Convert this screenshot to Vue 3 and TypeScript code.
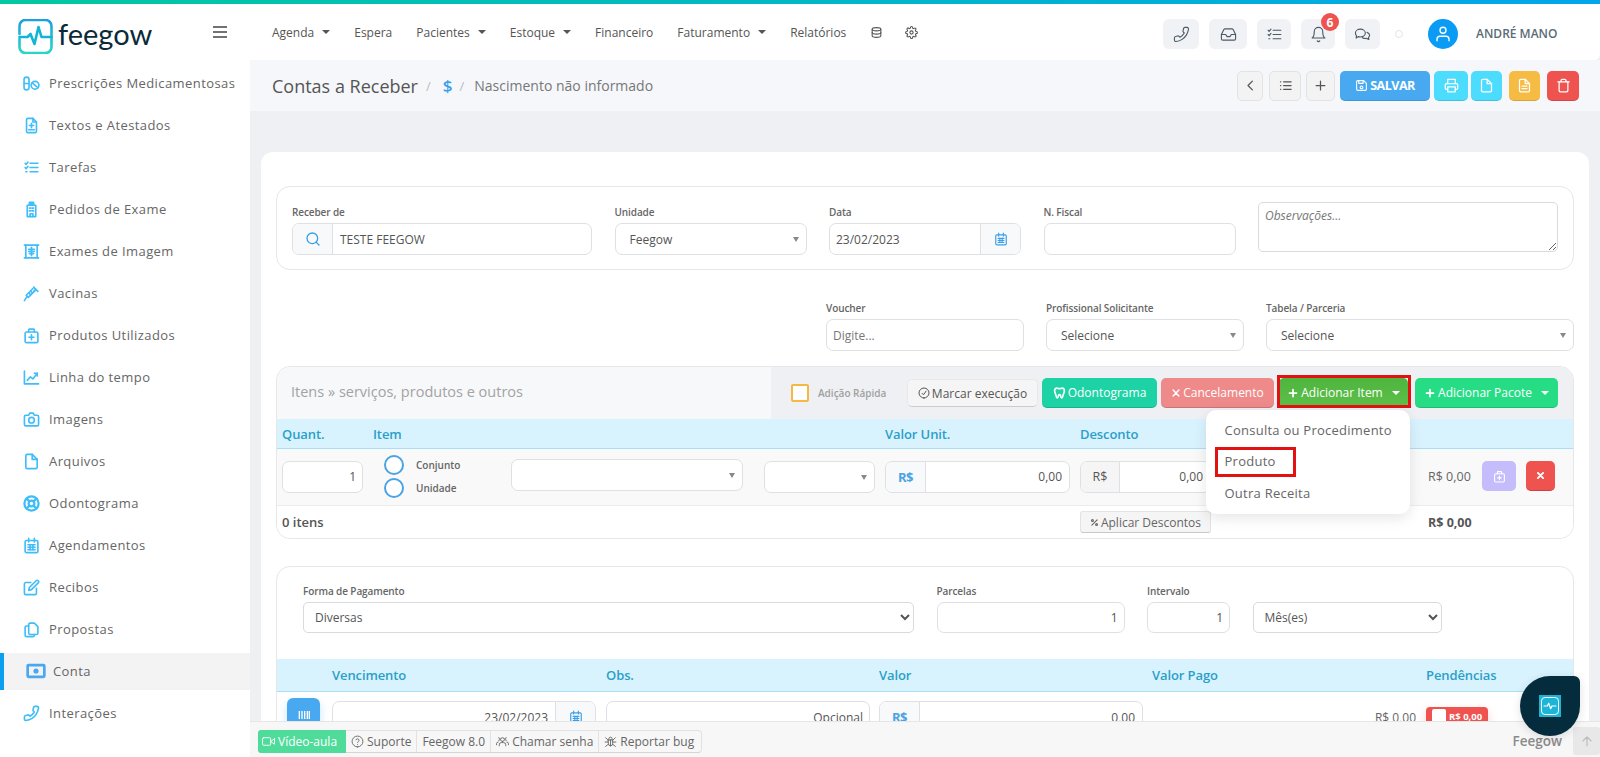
<script setup lang="ts">
import { h } from 'vue'

const icons: Record<string, string[]> = {
  phone: ['M22 16.92v3a2 2 0 0 1-2.18 2 19.79 19.79 0 0 1-8.63-3.07 19.5 19.5 0 0 1-6-6 19.79 19.79 0 0 1-3.07-8.67A2 2 0 0 1 4.11 2h3a2 2 0 0 1 2 1.72 12.84 12.84 0 0 0 .7 2.81 2 2 0 0 1-.45 2.11L8.09 9.91a16 16 0 0 0 6 6l1.27-1.27a2 2 0 0 1 2.11-.45 12.84 12.84 0 0 0 2.81.7A2 2 0 0 1 22 16.92z'],
  inbox: ['M22 12h-6l-2 3h-4l-2-3H2', 'M5.45 5.11L2 12v6a2 2 0 0 0 2 2h16a2 2 0 0 0 2-2v-6l-3.45-6.89A2 2 0 0 0 16.76 4H7.24a2 2 0 0 0-1.79 1.11z'],
  tasks: ['M10 6h11M10 12h11M10 18h11', 'M3 6l1.5 1.5L7 4.5M3 12l1.5 1.5L7 10.5', 'M4 18h1.5'],
  bell: ['M18 8A6 6 0 0 0 6 8c0 7-3 9-3 9h18s-3-2-3-9', 'M13.73 21a2 2 0 0 1-3.46 0'],
  chat: ['M2 10c0-3 3-5.500 7-5.500s7 2.500 7 5.500-3 5.500-7 5.500c-1 0-2-.1-3-.5L3 17l.6-3C2.600 13 2 11.500 2 10z', 'M18.500 9c2 .8 3.500 2.200 3.500 4 0 1.200-.6 2.200-1.500 3l.5 3-3.500-1.500c-1.800.4-4 0-5.500-1'],
  db: ['M12 3c4.400 0 8 1.300 8 3s-3.600 3-8 3-8-1.300-8-3 3.600-3 8-3z', 'M20 12c0 1.700-3.600 3-8 3s-8-1.300-8-3', 'M4 6v12c0 1.700 3.600 3 8 3s8-1.300 8-3V6'],
  gear: ['M12 15a3 3 0 1 0 0-6 3 3 0 0 0 0 6z', 'M19.4 15a1.65 1.65 0 0 0 .33 1.82l.06.06a2 2 0 1 1-2.83 2.83l-.06-.06a1.65 1.65 0 0 0-1.82-.33 1.65 1.65 0 0 0-1 1.51V21a2 2 0 1 1-4 0v-.09A1.65 1.65 0 0 0 9 19.4a1.65 1.65 0 0 0-1.82.33l-.06.06a2 2 0 1 1-2.83-2.83l.06-.06a1.65 1.65 0 0 0 .33-1.82 1.65 1.65 0 0 0-1.51-1H3a2 2 0 1 1 0-4h.09A1.65 1.65 0 0 0 4.600 9a1.65 1.65 0 0 0-.33-1.82l-.06-.06a2 2 0 1 1 2.83-2.83l.06.06a1.65 1.65 0 0 0 1.82.33H9a1.65 1.65 0 0 0 1-1.51V3a2 2 0 1 1 4 0v.09a1.65 1.65 0 0 0 1 1.51 1.65 1.65 0 0 0 1.82-.33l.06-.06a2 2 0 1 1 2.83 2.83l-.06.06a1.65 1.65 0 0 0-.33 1.82V9a1.65 1.65 0 0 0 1.51 1H21a2 2 0 1 1 0 4h-.09a1.65 1.65 0 0 0-1.51 1z'],
  user: ['M20 21v-2a4 4 0 0 0-4-4H8a4 4 0 0 0-4 4v2', 'M12 11a4 4 0 1 0 0-8 4 4 0 0 0 0 8z'],
  left: ['M15 19l-7-7 7-7'],
  list: ['M9 6h12M9 12h12M9 18h12', 'M4 6h.5M4 12h.5M4 18h.5'],
  plus: ['M12 5v14M5 12h14'],
  save: ['M19 21H5a2 2 0 0 1-2-2V5a2 2 0 0 1 2-2h11l5 5v11a2 2 0 0 1-2 2z', 'M7 3v5h8V3', 'M12 18a2.500 2.500 0 1 0 0-5 2.500 2.500 0 0 0 0 5z'],
  printer: ['M6 9V2h12v7', 'M6 18H4a2 2 0 0 1-2-2v-5a2 2 0 0 1 2-2h16a2 2 0 0 1 2 2v5a2 2 0 0 1-2 2h-2', 'M6 14h12v8H6z'],
  file: ['M13 2H6a2 2 0 0 0-2 2v16a2 2 0 0 0 2 2h12a2 2 0 0 0 2-2V9z', 'M13 2v7h7'],
  filetext: ['M13 2H6a2 2 0 0 0-2 2v16a2 2 0 0 0 2 2h12a2 2 0 0 0 2-2V9z', 'M13 2v7h7', 'M8 13h8M8 17h8'],
  trash: ['M3 6h18', 'M19 6v14a2 2 0 0 1-2 2H7a2 2 0 0 1-2-2V6m3 0V4a2 2 0 0 1 2-2h4a2 2 0 0 1 2 2v2'],
  search: ['M11 19a8 8 0 1 0 0-16 8 8 0 0 0 0 16z', 'M21 21l-4.350-4.350'],
  cal: ['M5 5h14a2 2 0 0 1 2 2v13a2 2 0 0 1-2 2H5a2 2 0 0 1-2-2V7a2 2 0 0 1 2-2z', 'M8 2v5M16 2v5', 'M7 11h10M7 14.500h10M7 18h10', 'M10 11v7M14 11v7'],
  pills: ['M5 3a3.500 3.500 0 0 1 3.500 3.500v11a3.500 3.500 0 0 1-7 0v-11A3.500 3.500 0 0 1 5 3z', 'M1.500 12h7', 'M17 9a5.500 5.500 0 1 0 0 11 5.500 5.500 0 0 0 0-11z', 'M13 11l8 7'],
  filemed: ['M14 2H7a2 2 0 0 0-2 2v16a2 2 0 0 0 2 2h10a2 2 0 0 0 2-2V7z', 'M14 2v5h5', 'M12 9v6M9 12h6', 'M8 18h8'],
  hospital: ['M6 6h12v16H6z', 'M9 2h6v4H9z', 'M12 2.500v3M10.500 4h3', 'M9 10h2M13 10h2M9 14h2M13 14h2', 'M10 22v-4h4v4'],
  xray: ['M2 3h20M2 21h20', 'M4 3v18M20 3v18', 'M12 6v12', 'M8 9h8M8 12h8M9 15h6'],
  syringe: ['M15 3l6 6', 'M18 6l-3 3', 'M17 8L7.500 17.500l-3-3L14 5', 'M5.500 16.500L2 22', 'M11 9l2 2M8.500 11.500l2 2'],
  medkit: ['M5 7h14a2 2 0 0 1 2 2v11a2 2 0 0 1-2 2H5a2 2 0 0 1-2-2V9a2 2 0 0 1 2-2z', 'M8 7V4a1 1 0 0 1 1-1h6a1 1 0 0 1 1 1v3', 'M12 11v7M8.500 14.500h7'],
  chart: ['M2 3v18h20', 'M6 16l4.500-5 3.500 3 6-8', 'M16 6h4v4'],
  camera: ['M4 6h4l1.500-3h5L16 6h4a2 2 0 0 1 2 2v11a2 2 0 0 1-2 2H4a2 2 0 0 1-2-2V8a2 2 0 0 1 2-2z', 'M12 17a4 4 0 1 0 0-8 4 4 0 0 0 0 8z'],
  ring: ['M12 22a10 10 0 1 0 0-20 10 10 0 0 0 0 20z', 'M12 16a4 4 0 1 0 0-8 4 4 0 0 0 0 8z', 'M5 5l4 4M19 5l-4 4M5 19l4-4M19 19l-4-4'],
  edit: ['M11 5H4a2 2 0 0 0-2 2v13a2 2 0 0 0 2 2h13a2 2 0 0 0 2-2v-7', 'M18.500 2.500a2.120 2.120 0 0 1 3 3L12 15l-4 1 1-4z'],
  copy: ['M10 3h6l5 5v9a2 2 0 0 1-2 2h-9a2 2 0 0 1-2-2V5a2 2 0 0 1 2-2z', 'M8 7H5a2 2 0 0 0-2 2v11a2 2 0 0 0 2 2h9a2 2 0 0 0 2-2v-1'],
  money: ['M3 5h18a1 1 0 0 1 1 1v12a1 1 0 0 1-1 1H3a1 1 0 0 1-1-1V6a1 1 0 0 1 1-1z', 'M12 13.500a1.500 1.500 0 1 0 0-3 1.500 1.500 0 0 0 0 3z'],
  check: ['M12 22a10 10 0 1 0 0-20 10 10 0 0 0 0 20z', 'M8 12.500l3 3 5-7'],
  tooth: ['M7 3c-3 0-4 3-4 5 0 4 2 5 2.500 8 .4 2.500 1 5 2.500 5s1.500-2 2-4c.4-1.500 1-2 2-2s1.600.5 2 2c.5 2 .5 4 2 4s2.100-2.500 2.500-5c.5-3 2.500-4 2.500-8 0-2-1-5-4-5-2 0-3 1-5 1S9 3 7 3z'],
  x: ['M5 5l14 14M19 5L5 19'],
  percent: ['M19 5L5 19', 'M6.500 9a2.500 2.500 0 1 0 0-5 2.500 2.500 0 0 0 0 5z', 'M17.500 20a2.500 2.500 0 1 0 0-5 2.500 2.500 0 0 0 0 5z'],
  video: ['M23 7l-7 5 7 5V7z', 'M3 5h11a2 2 0 0 1 2 2v10a2 2 0 0 1-2 2H3a2 2 0 0 1-2-2V7a2 2 0 0 1 2-2z'],
  help: ['M12 22a10 10 0 1 0 0-20 10 10 0 0 0 0 20z', 'M9.100 9a3 3 0 0 1 5.800 1c0 2-3 2.500-3 4', 'M12 17.500h.01'],
  users: ['M12 12a3.500 3.500 0 1 0 0-7 3.500 3.500 0 0 0 0 7z', 'M6 20v-2a4 4 0 0 1 4-4h4a4 4 0 0 1 4 4v2', 'M5 10a2.500 2.500 0 1 0 0-5M19 10a2.500 2.500 0 1 1 0-5', 'M1 18v-2a3 3 0 0 1 3-3M23 18v-2a3 3 0 0 0-3-3'],
  bug: ['M8 9h8v7a4 4 0 0 1-8 0z', 'M9 9V7a3 3 0 0 1 6 0v2', 'M12 9v11', 'M3 5l5 5M21 5l-5 5M2 13h6M22 13h-6M3 21l5-4M21 21l-5-4'],
  up: ['M12 20V5M5 12l7-7 7 7'],
  bars: ['M5 6v12M9 6v12M13 6v12M17 6v12M20 6v12'],
  pulse: ['M3 12h5l2-4 3 8 2-4h6'],
}

const Ic = (props: { n: string }) =>
  h(
    'svg',
    { viewBox: '0 0 24 24', fill: 'none', stroke: 'currentColor', 'stroke-width': 2, 'stroke-linecap': 'round', 'stroke-linejoin': 'round' },
    (icons[props.n] || []).map((d) => h('path', { d })),
  )
Ic.props = ['n']

const nav = [
  { label: 'Agenda', caret: true },
  { label: 'Espera', caret: false },
  { label: 'Pacientes', caret: true },
  { label: 'Estoque', caret: true },
  { label: 'Financeiro', caret: false },
  { label: 'Faturamento', caret: true },
  { label: 'Relatórios', caret: false },
]

const tools = [
  { n: 'phone', cls: 'w36' },
  { n: 'inbox', cls: 'w38' },
  { n: 'tasks', cls: 'w34' },
  { n: 'bell', cls: 'w34', badge: '6' },
  { n: 'chat', cls: 'w35' },
]

const side = [
  { n: 'pills', t: 'Prescrições Medicamentosas' },
  { n: 'filemed', t: 'Textos e Atestados' },
  { n: 'tasks', t: 'Tarefas' },
  { n: 'hospital', t: 'Pedidos de Exame' },
  { n: 'xray', t: 'Exames de Imagem' },
  { n: 'syringe', t: 'Vacinas' },
  { n: 'medkit', t: 'Produtos Utilizados' },
  { n: 'chart', t: 'Linha do tempo' },
  { n: 'camera', t: 'Imagens' },
  { n: 'file', t: 'Arquivos' },
  { n: 'ring', t: 'Odontograma', bold: true },
  { n: 'cal', t: 'Agendamentos' },
  { n: 'edit', t: 'Recibos' },
  { n: 'copy', t: 'Propostas' },
  { n: 'money', t: 'Conta', active: true, bold: true },
  { n: 'phone', t: 'Interações', flip: true },
]

const menu = ['Consulta ou Procedimento', 'Produto', 'Outra Receita']
</script>

<template>
  <div class="app">
    <div class="topline"></div>
    <header class="header">
      <div class="brand">
        <svg class="logo" viewBox="0 0 35 35" fill="none" stroke-width="2.6" stroke-linecap="round" stroke-linejoin="round">
          <defs>
            <linearGradient id="lg" x1="0" y1="0" x2="0" y2="1">
              <stop offset="0" stop-color="#1e9fe0" />
              <stop offset="1" stop-color="#27d8c4" />
            </linearGradient>
          </defs>
          <path stroke="url(#lg)" d="M1.500 15V7a6 6 0 0 1 6-6h20a6 6 0 0 1 6 6v21a6 6 0 0 1-6 6h-20a6 6 0 0 1-6-6v-8" />
          <path stroke="#12b5d4" d="M1.500 18h8l3-3 4 10 4-17 3 10h10" />
        </svg>
        <span class="word">feegow</span>
        <svg class="burger" viewBox="0 0 14 12" fill="none" stroke="#444" stroke-width="1.600"><path d="M0 1h14M0 6h14M0 11h14" /></svg>
      </div>
      <nav class="nav">
        <span v-for="i in nav" :key="i.label" class="nav-item">{{ i.label }}<i v-if="i.caret" class="caret"></i></span>
        <Ic n="db" class="nav-ic" />
        <Ic n="gear" class="nav-ic gear" />
      </nav>
      <div class="tools">
        <span v-for="t in tools" :key="t.n" class="tool" :class="t.cls">
          <Ic :n="t.n" class="tool-ic" />
          <b v-if="t.badge" class="badge">{{ t.badge }}</b>
        </span>
        <span class="dot"></span>
        <span class="avatar"><Ic n="user" class="avatar-ic" /></span>
        <span class="uname">ANDRÉ MANO</span>
      </div>
    </header>

    <div class="body">
      <aside class="side">
        <a v-for="s in side" :key="s.t" class="side-item" :class="{ active: s.active }">
          <Ic :n="s.n" class="side-ic" :class="{ flip: s.flip, bold: s.bold }" />
          <span>{{ s.t }}</span>
        </a>
      </aside>

      <main class="main">
        <div class="pagebar">
          <h1 class="title">Contas a Receber</h1>
          <span class="sep">/</span>
          <span class="dollar">$</span>
          <span class="sep sep2">/</span>
          <span class="sub">Nascimento não informado</span>
          <div class="actions">
            <button class="tb light w26"><Ic n="left" class="tb-ic" /></button>
            <button class="tb light w32"><Ic n="list" class="tb-ic" /></button>
            <button class="tb light w29"><Ic n="plus" class="tb-ic" /></button>
            <button class="tb salvar"><Ic n="save" class="tb-ic sm" />SALVAR</button>
            <button class="tb cyan w34b"><Ic n="printer" class="tb-ic" /></button>
            <button class="tb cyan w31"><Ic n="file" class="tb-ic" /></button>
            <button class="tb yellow w31"><Ic n="filetext" class="tb-ic" /></button>
            <button class="tb red w32"><Ic n="trash" class="tb-ic" /></button>
          </div>
        </div>

        <div class="content">
          <section class="card">
            <div class="box box1">
              <div class="field">
                <label>Receber de</label>
                <div class="group">
                  <span class="addon a40"><Ic n="search" class="blue-ic" /></span>
                  <input class="bare" value="TESTE FEEGOW" />
                </div>
              </div>
              <div class="field">
                <label>Unidade</label>
                <div class="sel pad14">Feegow<i class="caret gray"></i></div>
              </div>
              <div class="field">
                <label>Data</label>
                <div class="group">
                  <input class="bare small" value="23/02/2023" />
                  <span class="addon a40 end"><Ic n="cal" class="blue-ic cal" /></span>
                </div>
              </div>
              <div class="field">
                <label>N. Fiscal</label>
                <input class="inp" />
              </div>
              <textarea class="obs" placeholder="Observações..."></textarea>
            </div>

            <div class="row2">
              <div class="field f2">
                <label>Voucher</label>
                <input class="inp" placeholder="Digite..." />
              </div>
              <div class="field f2">
                <label>Profissional Solicitante</label>
                <div class="sel pad14">Selecione<i class="caret gray"></i></div>
              </div>
              <div class="field f2">
                <label>Tabela / Parceria</label>
                <div class="sel pad14">Selecione<i class="caret gray"></i></div>
              </div>
            </div>

            <div class="panel">
              <div class="panel-head">
                <div class="panel-title">Itens » serviços, produtos e outros</div>
                <div class="panel-tools">
                  <span class="chk"></span>
                  <span class="quick">Adição Rápida</span>
                  <button class="pb white mark"><Ic n="check" class="pb-ic" />Marcar execução</button>
                  <button class="pb teal"><Ic n="tooth" class="pb-ic tooth" />Odontograma</button>
                  <button class="pb salmon"><Ic n="x" class="pb-ic thick xs" />Cancelamento</button>
                  <button class="pb green"><Ic n="plus" class="pb-ic thick" />Adicionar Item<i class="caret white-c"></i></button>
                  <button class="pb mint"><Ic n="plus" class="pb-ic thick" />Adicionar Pacote<i class="caret white-c"></i></button>
                </div>
              </div>

              <div class="items thead">
                <span>Quant.</span><span>Item</span><span>Valor Unit.</span><span>Desconto</span><span></span>
              </div>
              <div class="items irow">
                <input class="inp right qty" value="1" />
                <div class="item-cell">
                  <div class="radios">
                    <label class="radio"><i></i>Conjunto</label>
                    <label class="radio"><i></i>Unidade</label>
                  </div>
                  <div class="sel"><i class="caret gray"></i></div>
                  <div class="sel"><i class="caret gray"></i></div>
                </div>
                <div class="group g185">
                  <span class="addon a40 rs">R$</span>
                  <input class="bare right" value="0,00" />
                </div>
                <div class="group g131">
                  <span class="addon a39 rs2">R$</span>
                  <input class="bare right" value="0,00" />
                </div>
                <div class="total-cell">
                  <span class="amount">R$ 0,00</span>
                  <button class="sq purple"><Ic n="medkit" class="sq-ic" /></button>
                  <button class="sq redb"><Ic n="x" class="sq-ic x" /></button>
                </div>
              </div>
              <div class="items ifoot">
                <span class="count">0 itens</span>
                <button class="apply"><Ic n="percent" class="apply-ic" />Aplicar Descontos</button>
                <b class="sum">R$ 0,00</b>
              </div>

              <div class="menu">
                <div v-for="m in menu" :key="m" class="menu-item" :class="{ mark2: m === 'Produto' }">{{ m }}</div>
              </div>
            </div>

            <div class="box3">
              <div class="pay">
                <div class="field">
                  <label>Forma de Pagamento</label>
                  <select class="native"><option>Diversas</option></select>
                </div>
                <div class="field">
                  <label>Parcelas</label>
                  <input class="inp right h31" value="1" />
                </div>
                <div class="field">
                  <label>Intervalo</label>
                  <input class="inp right h31" value="1" />
                </div>
                <select class="native"><option>Mês(es)</option></select>
              </div>

              <div class="inst thead2">
                <span></span><span>Vencimento</span><span>Obs.</span><span>Valor</span><span>Valor Pago</span><span>Pendências</span>
              </div>
              <div class="inst">
                <button class="barcode"><Ic n="bars" class="bar-ic" /></button>
                <div class="group w264 t3">
                  <input class="bare right" value="23/02/2023" />
                  <span class="addon a40 end"><Ic n="cal" class="blue-ic cal" /></span>
                </div>
                <input class="inp right w264 t3" value="Opcional" />
                <div class="group w264 t3">
                  <span class="addon a40 rs">R$</span>
                  <input class="bare right" value="0,00" />
                </div>
                <span class="paid">R$ 0,00</span>
                <div class="pend"><i></i>R$ 0,00</div>
              </div>
            </div>
          </section>
        </div>

        <footer class="foot">
          <div class="foot-group">
            <span class="fb vid"><Ic n="video" class="fb-ic" />Vídeo-aula</span>
            <span class="fb"><Ic n="help" class="fb-ic" />Suporte</span>
            <span class="fb">Feegow 8.0</span>
            <span class="fb"><Ic n="users" class="fb-ic" />Chamar senha</span>
            <span class="fb last"><Ic n="bug" class="fb-ic" />Reportar bug</span>
          </div>
          <b class="foot-brand">Feegow</b>
          <span class="totop"><Ic n="up" class="up-ic" /></span>
        </footer>

        <div class="fab">
          <span class="fab-sq"><Ic n="pulse" class="fab-ic" /></span>
        </div>
      </main>
    </div>
  </div>
</template>

<style>
html, body { margin: 0; padding: 0; overflow: hidden; }
</style>

<style scoped>
* { box-sizing: border-box; }
.app { height: 100vh; display: flex; flex-direction: column; overflow: hidden; font-family: "Open Sans", "Noto Sans", sans-serif; color: #666; font-size: 12px; background: #eff0f4; }
.topline { height: 4px; flex: none; background: linear-gradient(90deg, #04c8a0, #02a6ec); }
.header { height: 56px; flex: none; display: flex; align-items: center; background: #fff; border-bottom-right-radius: 6px; position: relative; z-index: 2; }
.brand { width: 250px; flex: none; display: flex; align-items: center; padding-left: 18px; height: 100%; }
.logo { width: 35px; height: 35px; flex: none; margin-top: 8px; }
.word { font-family: Lato, sans-serif; font-size: 29px; color: #0a2a3a; margin-left: 5px; line-height: 1; margin-top: 3px; }
.burger { width: 14px; height: 12px; margin-left: auto; margin-right: 23px; margin-top: -1px; }
.nav { display: flex; align-items: center; padding-left: 22px; gap: 24px; flex: none; }
.nav-item { display: flex; align-items: center; color: #555; }
.nav-ic { width: 13px; height: 13px; color: #555; }
.gear { margin-left: -2px; }
.caret { display: inline-block; width: 0; height: 0; border-left: 4px solid transparent; border-right: 4px solid transparent; border-top: 4px solid #555; margin-left: 8px; }
.tools { position: absolute; left: 1163px; top: 15px; display: flex; align-items: center; gap: 10px; height: 30px; }
.tool { height: 30px; border-radius: 6px; background: #f1f2f6; display: flex; align-items: center; justify-content: center; position: relative; color: #4c5a66; }
.w36 { width: 36px; } .w38 { width: 38px; } .w34 { width: 34px; } .w35 { width: 35px; }
.tool-ic { width: 17px; height: 17px; stroke-width: 1.6; }
.w36 .tool-ic, .side-ic.flip { transform: scaleX(-1); }
.badge { position: absolute; left: 20px; top: -6px; width: 18px; height: 18px; border-radius: 50%; background: #ef5350; color: #fff; font-size: 12px; display: flex; align-items: center; justify-content: center; }
.dot { width: 8px; height: 8px; border-radius: 50%; border: 1px solid #e4e4e4; margin-left: 5px; }
.avatar { width: 30px; height: 30px; border-radius: 50%; background: #0a9bf5; display: flex; align-items: center; justify-content: center; margin-left: 15px; }
.avatar-ic { width: 18px; height: 18px; color: #fff; stroke-width: 1.8; }
.uname { font-size: 12px; font-weight: 600; color: #5a6b76; margin-left: 8px; margin-top: -2px; white-space: nowrap; }

.body { flex: 1; display: flex; min-height: 0; }
.side { width: 250px; flex: none; background: #fff; padding-top: 2px; }
.side-item { height: 42px; display: flex; align-items: center; padding-left: 23px; font-size: 13px; letter-spacing: 0.42px; color: #666; white-space: nowrap; position: relative; }
.side-ic { width: 17px; height: 17px; color: #3fbdf9; margin-right: 9px; flex: none; stroke-width: 2.300; }
.side-ic.bold { stroke-width: 3.200; }
.side-item.active { background: #f3f3f4; height: 37px; margin: 3px 0 2px; padding-bottom: 1px; }
.side-item.active::before { content: ""; position: absolute; left: 0; top: 0; bottom: 0; width: 4px; background: #0a9ff0; }
.side-item.active .side-ic { width: 20px; height: 20px; color: #48a9f0; margin-left: 3px; margin-right: 7px; }

.main { flex: 1; min-width: 0; position: relative; display: flex; flex-direction: column; overflow: hidden; }
.pagebar { height: 51px; flex: none; background: #f6f7fb; display: flex; align-items: center; padding-left: 22px; position: relative; }
.title { margin: 0; font-size: 18px; font-weight: 400; color: #555; }
.sep { color: #bbb; font-size: 13px; margin-left: 8px; }
.sep2 { margin-left: 7px; }
.dollar { color: #3a9fe8; font-size: 17px; font-weight: 600; margin-left: 12px; }
.sub { font-size: 14px; color: #777; margin-left: 10px; }
.actions { margin-left: auto; margin-right: 21px; display: flex; align-items: center; }
.tb { height: 30px; border: 0; border-radius: 5px; display: flex; align-items: center; justify-content: center; padding: 0; color: #fff; font-family: inherit; border-bottom: 1px solid rgba(0, 0, 0, 0.12); flex: none; }
.tb-ic { width: 15px; height: 15px; }
.tb-ic.sm { width: 13px; height: 13px; margin-right: 2px; }
.light { background: #f3f3f3; color: #555; border: 1px solid #e3e3e3; }
.w26 { width: 26px; } .w32 { width: 32px; margin-left: 6px; } .w29 { width: 29px; margin-left: 5px; } .w34b { width: 34px; margin-left: 4px; } .w31 { width: 31px; margin-left: 3px; }
.yellow.w31 { margin-left: 7px; }
.red.w32 { margin-left: 7px; }
.salvar { width: 90px; margin-left: 5px; background: #48a9f0; font-size: 12.500px; font-weight: 700; letter-spacing: -0.5px; }
.cyan { background: #4cdcfe; }
.yellow { background: #f6bb42; }
.red { background: #ef5350; }

.content { flex: 1; min-height: 0; padding: 41px 11px 0; overflow: hidden; }
.card { background: #fff; border-radius: 12px 12px 0 0; padding: 34px 15px 0; height: 700px; }
.box { border: 1px solid #e6e7ea; border-radius: 14px; }
.box1 { height: 84px; padding: 15px 15px 0; display: grid; grid-template-columns: 300px 192px 192px 192px 300px; column-gap: 22.500px; align-items: start; }
.field { display: flex; flex-direction: column; min-width: 0; }
.field label { height: 20px; padding-top: 1px; font-size: 10px; font-weight: 600; color: #666; letter-spacing: -0.1px; line-height: 17px; white-space: nowrap; }
.box1 .field { padding-top: 1px; }
.group { height: 32px; display: flex; border: 1px solid #dfe0e3; border-radius: 7px; background: #fff; overflow: hidden; flex: none; }
.addon { flex: none; background: #f8f9fa; display: flex; align-items: center; justify-content: center; border-right: 1px solid #dfe0e3; }
.addon.end { border-right: 0; border-left: 1px solid #dfe0e3; }
.a40 { width: 40px; } .a39 { width: 39px; }
.blue-ic { width: 16px; height: 16px; color: #3a9fe8; }
.cal { width: 14px; height: 16px; }
.bare { flex: 1; min-width: 0; border: 0; outline: 0; padding: 0 7px; font: 12px "Open Sans", sans-serif; color: #555; background: transparent; }
.bare:first-child { padding-left: 6px; }
.addon + .bare { padding-left: 7px; }
.bare.right { text-align: right; }
.inp { height: 32px; width: 100%; border: 1px solid #dfe0e3; border-radius: 7px; outline: 0; padding: 0 6px; font: 12px "Open Sans", sans-serif; color: #555; background: #fff; flex: none; }
.inp::placeholder { color: #777; }
.inp.right { text-align: right; }
.sel { height: 32px; border: 1px solid #dfe0e3; border-radius: 7px; background: #fff; display: flex; align-items: center; font-size: 12px; color: #555; position: relative; min-width: 0; }
.pad14 { padding-left: 14px; }
.caret.gray { position: absolute; right: 7px; top: 13px; border-top-color: #888; margin: 0; border-left-width: 3.500px; border-right-width: 3.500px; border-top-width: 5px; }
.obs { width: 300px; height: 50px; margin: 0; border: 1px solid #d9dadd; border-radius: 5px; padding: 4px 6px; font: italic 12px "Open Sans", sans-serif; color: #555; outline: 0; background: #fff; display: block; }
.obs::placeholder { color: #777; }
.row2 { margin-top: 32px; display: grid; grid-template-columns: 198px 198px 308px; column-gap: 22px; justify-content: end; }
.f2 label { height: 17px; line-height: 13px; padding: 0; }

.panel { margin-top: 15px; border: 1px solid #e6e7ea; border-radius: 14px; position: relative; }
.panel-head { height: 52px; display: flex; background: #f7f8fa; border-radius: 14px 14px 0 0; }
.panel-title { width: 494px; flex: none; padding: 15px 0 0 14px; font-size: 14.500px; color: #a3a3a3; line-height: 20px; }
.panel-tools { flex: 1; background: #eff0f3; border-top-right-radius: 14px; display: flex; align-items: center; padding-left: 20px; }
.chk { width: 18px; height: 18px; border: 2px solid #f5b942; border-radius: 2px; background: #fff; flex: none; margin-top: -1px; }
.quick { font-size: 10px; font-weight: 600; color: #a0a0a0; margin-left: 9px; width: 89px; flex: none; }
.pb { height: 30px; border: 0; border-radius: 5px; display: flex; align-items: center; justify-content: center; padding: 0; font: 12px "Open Sans", sans-serif; color: #fff; white-space: nowrap; flex: none; margin-right: 4px; border-bottom: 1px solid rgba(0, 0, 0, 0.15); position: relative; }
.pb-ic { width: 12px; height: 12px; margin-right: 2px; }
.pb-ic.thick { stroke-width: 3.500; }
.pb-ic.xs { width: 10px; height: 10px; }
.pb-ic.tooth { stroke-width: 3; width: 13px; height: 14px; }
.white { background: #f5f5f5; color: #555; width: 131px; height: 28px; border: 1px solid #e8e8e8; border-bottom-color: #ccc; }
.teal { background: #1dd2a4; width: 115px; }
.salmon { background: #ee8a8a; width: 113px; }
.green { background: linear-gradient(#4fb53f, #5cbf49); width: 129px; margin-left: 1px; margin-right: 7px; }
.green::after { content: ""; position: absolute; left: -2px; right: -3px; top: -3px; bottom: -1px; border: 3px solid #e31212; box-sizing: border-box; }
.mint { background: #26dd85; width: 143px; margin-right: 0; }
.white-c { border-top-color: #fff; margin-left: 9px; }

.items { display: grid; grid-template-columns: 91px 512px 195px 348px 1fr; padding-left: 5px; align-items: center; }
.thead { height: 30px; background: #d9f3fe; border-bottom: 1px solid #a8dff5; font-size: 13px; font-weight: 600; color: #2a9fc9; letter-spacing: -0.1px; }
.irow { height: 57px; padding-bottom: 1px; background: #f9f9f9; border-bottom: 1px solid #ececec; }
.qty { width: 81px; }
.item-cell { display: grid; grid-template-columns: 138px 232px 132px; align-items: center; }
.item-cell .sel:nth-child(2) { margin-top: -4px; }
.item-cell .sel:nth-child(3) { margin-left: 21px; width: 111px; }
.radios { padding-left: 11px; display: flex; flex-direction: column; gap: 3px; }
.radio { display: flex; align-items: center; font-size: 10px; font-weight: 600; color: #666; height: 20px; }
.radio i { width: 20px; height: 20px; border-radius: 50%; border: 2px solid #4aa3e3; margin-right: 12px; background: #fff; flex: none; }
.rs { color: #4aa3e3; font-weight: 700; font-size: 13px; letter-spacing: -0.4px; }
.rs2 { background: #f5f5f5; color: #555; font-size: 12.500px; }
.g185 { width: 185px; }
.g131 { width: 131px; }
.total-cell { display: flex; align-items: center; margin-top: -1px; }
.amount { width: 54px; color: #666; font-size: 12.500px; white-space: nowrap; }
.sq { width: 34px; height: 30px; border: 0; border-radius: 5px; padding: 0; display: flex; align-items: center; justify-content: center; color: #fff; flex: none; }
.purple { background: #c4bcfb; }
.redb { background: #ef5350; width: 29px; margin-left: 10px; border-bottom: 1px solid #cf3f3c; }
.sq-ic { width: 13px; height: 13px; }
.sq-ic.x { width: 9px; height: 9px; stroke-width: 5; }
.ifoot { height: 32px; background: #fff; border-radius: 0 0 14px 14px; }
.count { font-size: 13px; font-weight: 600; color: #555; }
.apply { grid-column: 4; width: 131px; height: 22px; border: 1px solid #e3e3e3; border-bottom-color: #c9c9c9; background: #f5f5f5; border-radius: 3px; padding: 0; font: 12px "Open Sans", sans-serif; color: #666; display: flex; align-items: center; justify-content: center; }
.apply-ic { width: 9px; height: 9px; margin-right: 2px; stroke-width: 3; }
.sum { color: #555; font-size: 12.500px; }
.menu { position: absolute; left: 929px; top: 43px; width: 204px; height: 104px; background: #fff; border-radius: 10px; box-shadow: 0 4px 14px rgba(0, 0, 0, 0.1); padding-top: 4px; z-index: 3; }
.menu-item { height: 31.500px; padding-left: 18.500px; display: flex; align-items: center; font-size: 13px; color: #666; letter-spacing: 0.25px; position: relative; }
.mark2::after { content: ""; position: absolute; left: 9px; top: 1px; width: 81px; height: 30px; border: 3px solid #e31212; box-sizing: border-box; }

.box3 { margin-top: 27px; border: 1px solid #e6e7ea; border-radius: 14px; padding-top: 15px; }
.pay { display: grid; grid-template-columns: 611px 188px 83px 189px; column-gap: 22.500px; padding-left: 26px; align-items: end; }
.pay .field label { height: 20px; }
.native { height: 31px; width: 100%; border: 1px solid #d9dadd; border-radius: 5px; background: #fff; font: 12px "Open Sans", sans-serif; color: #555; padding: 0 7px; outline: 0; }
.h31 { height: 31px; }
.inst { display: grid; grid-template-columns: 45px 274px 273px 273px 274px 1fr; padding-left: 10px; align-items: start; }
.thead2 { margin-top: 26px; height: 33px; align-items: center; background: #d9f3fe; border-bottom: 1px solid #a8dff5; font-size: 13px; font-weight: 600; color: #2a9fc9; letter-spacing: -0.1px; }
.barcode { width: 33px; height: 33px; margin-top: 6px; border: 0; border-radius: 6px; background: #48a9f0; display: flex; align-items: center; justify-content: center; padding: 0; color: #fff; box-shadow: 0 4px 8px rgba(72, 169, 240, 0.3); }
.bar-ic { width: 16px; height: 16px; stroke-linecap: butt; }
.w264 { width: 264px; }
.t3 { margin-top: 9px; }
.paid { margin-top: 17px; text-align: right; padding-right: 10px; font-size: 12px; }
.pend { margin-top: 15px; width: 62px; height: 28px; background: #ef5350; border-radius: 4px; color: #fff; font-size: 9.500px; font-weight: 700; display: flex; align-items: flex-start; padding: 3px 0 0 6px; line-height: 14px; box-shadow: 0 4px 10px rgba(239, 83, 80, 0.25); }
.pend i { width: 14px; height: 16px; background: #fff; border-radius: 2px; margin: -1px 3px 0 0; flex: none; }

.foot { position: absolute; left: 0; right: 0; bottom: 0; height: 36px; background: #f7f7f7; border-top: 1px solid #e6e6e6; display: flex; align-items: flex-start; padding: 8px 0 0 8px; z-index: 4; }
.foot-group { display: flex; height: 23px; border: 1px solid #e2e2e2; border-radius: 4px; background: #f7f7f7; border-bottom-color: #d5d5d5; }
.fb { display: flex; align-items: center; padding: 0 5px; font-size: 12px; color: #666; border-right: 1px solid #e2e2e2; white-space: nowrap; }
.fb.last { border-right: 0; padding-right: 7px; }
.vid { background: #4fdc9a; color: #fff; border-radius: 3px 0 0 3px; width: 88px; margin: -1px 0 -1px -1px; padding: 0 0 0 4px; border-right: 0; }
.fb-ic { width: 13px; height: 13px; margin-right: 3px; stroke-width: 1.700; }
.foot-brand { margin-left: auto; margin-top: 2px; font-size: 13.500px; font-weight: 600; color: #8a8a8a; margin-right: 11px; }
.totop { width: 27px; height: 28px; background: #e8e8e8; border-radius: 3px; margin-top: -3px; display: flex; align-items: center; justify-content: center; color: #bbb; }
.up-ic { width: 14px; height: 14px; }
.fab { position: absolute; left: 1270px; top: 616px; width: 60px; height: 60px; background: #052c3d; border-radius: 50% 10% 50% 50%; display: flex; align-items: center; justify-content: center; z-index: 5; box-shadow: 0 2px 10px rgba(0, 0, 0, 0.12); }
.fab-sq { width: 22px; height: 22px; background: #1cb5d8; display: flex; align-items: center; justify-content: center; }
.fab-ic { width: 18px; height: 18px; color: #fff; stroke-width: 1.800; border: 1.500px solid #fff; border-radius: 4px; }
</style>
